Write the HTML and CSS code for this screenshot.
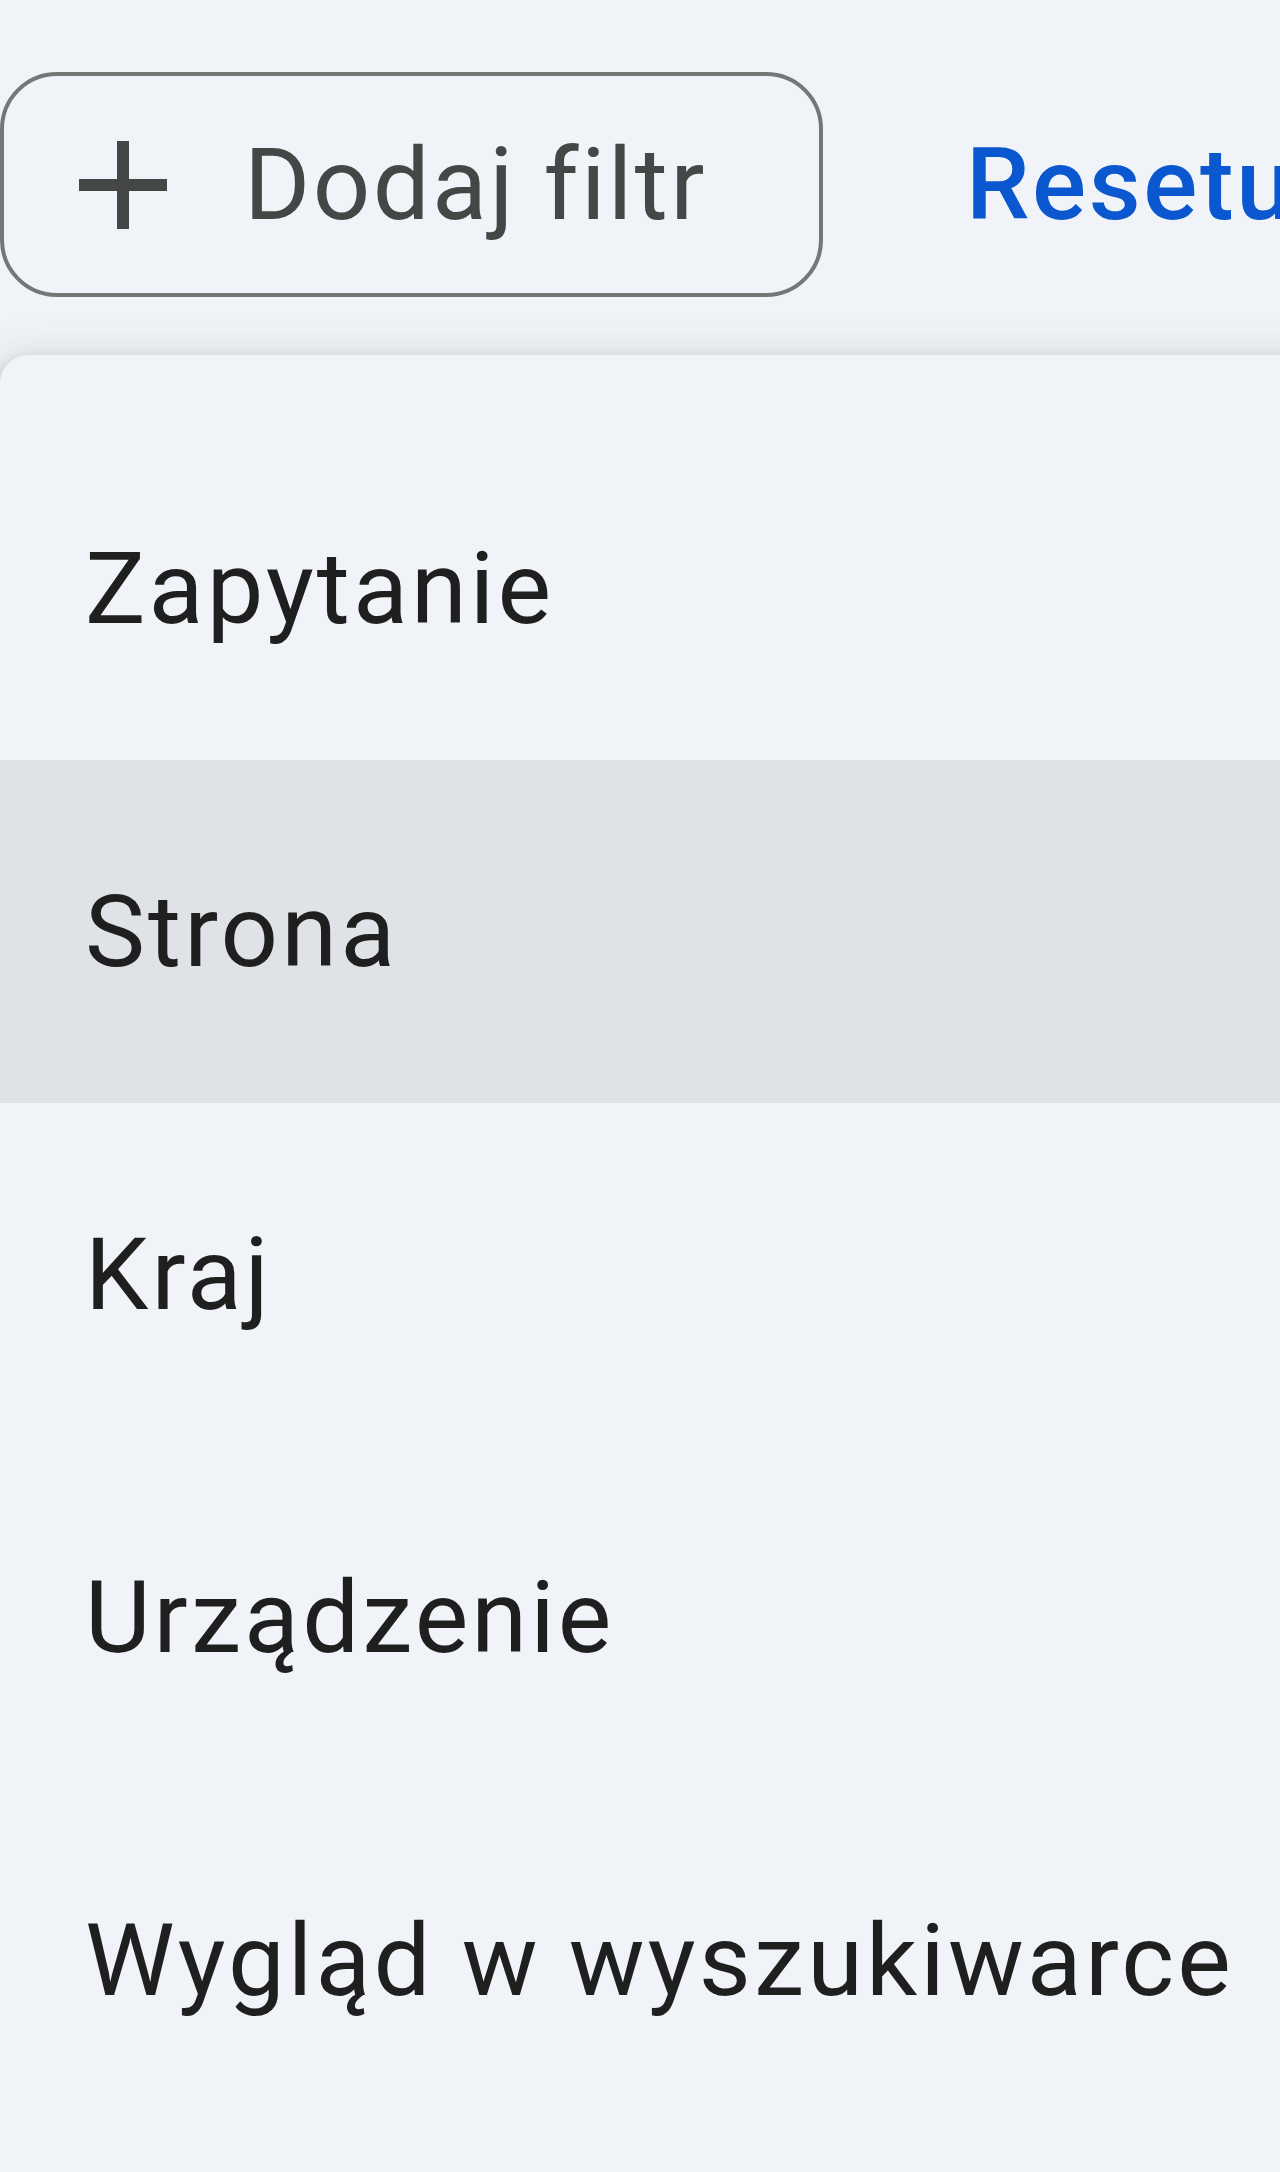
FILE: index.html
```html
<!DOCTYPE html>
<html lang="pl">

<head>
    <meta charset="UTF-8">
    <meta name="viewport" content="width=device-width, initial-scale=1.0">
    <title>Dodaj filtr</title>
    <link rel="stylesheet" href="styles.css">
</head>

<body>
    <div class="toolbar">
        <button class="chip">
            <svg class="chip-icon" viewBox="0 0 128 128" aria-hidden="true">
                <path d="M64 20V108M20 64H108" />
            </svg>
            <span>Dodaj filtr</span>
        </button>
        <button class="link">Resetuj filtry</button>
    </div>

    <!-- Filter type menu -->
    <div class="menu">
        <ul class="menu-list">
            <li class="menu-item">Zapytanie</li>
            <li class="menu-item hover">Strona</li>
            <li class="menu-item">Kraj</li>
            <li class="menu-item">Urządzenie</li>
            <li class="menu-item">Wygląd w wyszukiwarce</li>
        </ul>
    </div>
</body>

</html>
```

FILE: styles.css
```css
body {
    margin: 0;
    padding: 0;
    background: #f0f4f9;
    font-family: Roboto, "Noto Sans", sans-serif;
    overflow: hidden;
    width: 1280px;
    height: 2172px;
}

.toolbar {
    display: flex;
    align-items: center;
    gap: 58px;
    padding-top: 72px;
    white-space: nowrap;
}

.chip {
    display: flex;
    align-items: center;
    gap: 57px;
    box-sizing: border-box;
    height: 225px;
    padding: 0 112px 0 55px;
    border: 4px solid #747775;
    border-radius: 57px;
    background: transparent;
    color: #444746;
    font-family: Roboto, sans-serif;
    font-weight: 400;
    font-size: 101px;
    letter-spacing: 2.4px;
    cursor: pointer;
}

.chip-icon {
    width: 128px;
    height: 128px;
    flex-shrink: 0;
}

.chip-icon path {
    fill: none;
    stroke: #444746;
    stroke-width: 12;
}

.link {
    padding: 0 85px;
    border: none;
    background: none;
    color: #0b57d0;
    font-family: Roboto, sans-serif;
    font-weight: 500;
    font-size: 101px;
    letter-spacing: 2.6px;
    white-space: nowrap;
    cursor: pointer;
}

/* Menu surface */
.menu {
    margin-top: 58px;
    width: 1400px;
    background: #f0f4f9;
    border-radius: 28px 28px 0 0;
    box-shadow: 0 7px 14px 0 rgba(60, 64, 67, 0.3), 0 14px 43px 14px rgba(60, 64, 67, 0.15);
    padding: 62px 0;
}

.menu-list {
    list-style: none;
    margin: 0;
    padding: 0;
}

.menu-item {
    display: flex;
    align-items: center;
    height: 343px;
    padding-left: 85px;
    color: #1f1f1f;
    font-size: 101px;
    letter-spacing: 3.1px;
    white-space: nowrap;
    cursor: pointer;
}

.menu-item.hover {
    background: #dfe3e8;
}
```
